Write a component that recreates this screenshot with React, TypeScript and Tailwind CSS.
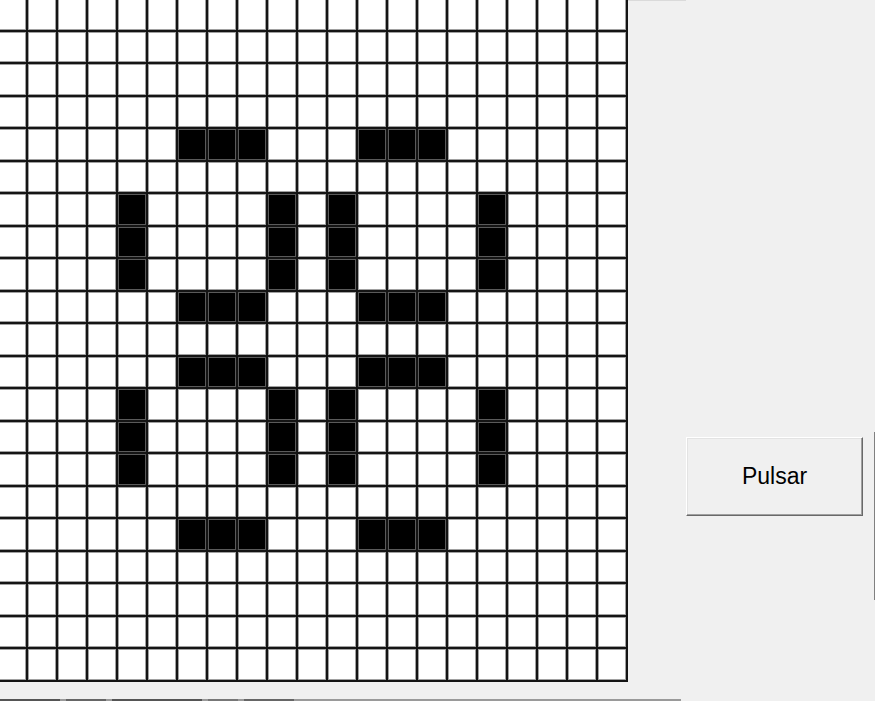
const SIZE = 21;

// two seven-segment "8" digits drawn on the 21x21 board
const lit = new Set<string>();
const hSeg = (row: number, c0: number) => {
  for (let c = c0; c < c0 + 3; c++) lit.add(`${row}-${c}`);
};
const vSeg = (r0: number, col: number) => {
  for (let r = r0; r < r0 + 3; r++) lit.add(`${r}-${col}`);
};
for (const [left, right] of [
  [4, 9],
  [11, 16],
]) {
  const mid = left === 4 ? 6 : 12;
  hSeg(4, mid);
  hSeg(9, mid);
  hSeg(11, mid);
  hSeg(16, mid);
  vSeg(6, left);
  vSeg(6, right);
  vSeg(12, left);
  vSeg(12, right);
}

function Board() {
  const cells = [];
  for (let r = 0; r < SIZE; r++) {
    for (let c = 0; c < SIZE; c++) {
      const on = lit.has(`${r}-${c}`);
      cells.push(
        <div
          key={`${r}-${c}`}
          className={
            on
              ? "border border-[#5a5a5a] bg-black"
              : "border border-[#a0a0a0] bg-white"
          }
        />
      );
    }
  }
  return (
    <div className="h-[682px] w-[628px] shrink-0 overflow-hidden">
      <div className="-ml-[2px] -mt-[1px] grid h-[683px] w-[630px] grid-cols-[repeat(21,minmax(0,1fr))] grid-rows-[repeat(21,minmax(0,1fr))] gap-[2px] bg-[#141414] pb-[2px] pr-[2px]">
        {cells}
      </div>
    </div>
  );
}

export default function App() {
  return (
    <div className="flex h-[701px] w-[875px] flex-col overflow-hidden bg-[#f0f0f0] font-['Liberation_Sans',Arial,sans-serif]">
      <div className="flex">
        <Board />
        <div className="flex flex-1">
          <div className="flex w-[235px] flex-col">
            <div className="h-px w-[58px] bg-[#dadada]" />
            <button className="ml-[58px] mt-[436px] flex h-[79px] w-[177px] items-center justify-center border border-b-[#696969] border-l-white border-r-[#696969] border-t-white bg-[#f0f0f0] text-[23px] text-black shadow-[inset_-1px_-1px_0_#a0a0a0,inset_1px_1px_0_#e3e3e3]">
              Pulsar
            </button>
          </div>
          <div className="ml-[11px] mt-[432px] h-[168px] w-px bg-[#808080]" />
        </div>
      </div>
      <div className="flex flex-1 flex-col">
        <div className="flex-1 rounded-bl-[3px] bg-[#f0f0f0]" />
        <div className="flex h-[2px] w-[681px] gap-[6px] bg-[#9a9a9a]">
          <div className="w-[60px] bg-[#555]" />
          <div className="w-[40px] bg-[#666]" />
          <div className="w-[90px] bg-[#555]" />
          <div className="w-[30px] bg-[#777]" />
          <div className="w-[50px] bg-[#666]" />
        </div>
      </div>
    </div>
  );
}
